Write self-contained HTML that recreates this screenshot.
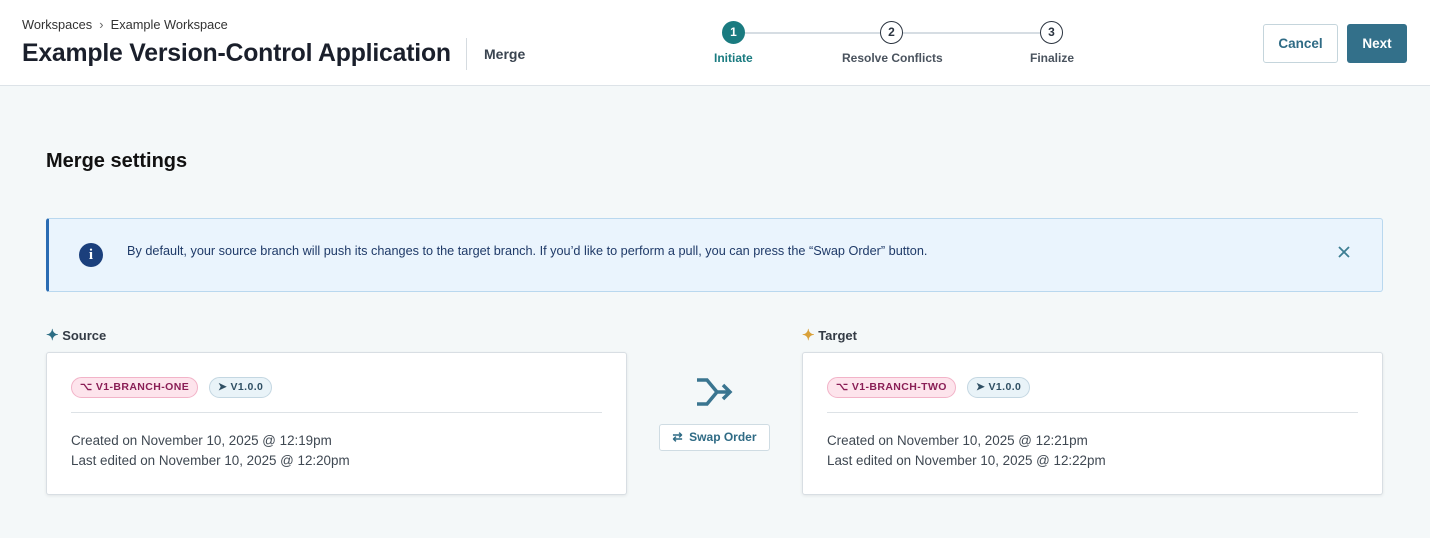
<!DOCTYPE html>
<html><head><meta charset="utf-8"><style>
*{box-sizing:border-box;margin:0;padding:0}
body{width:1430px;height:538px;overflow:hidden;background:#f4f8f9;font-family:"Liberation Sans",sans-serif;position:relative;color:#1c2230}
.abs{position:absolute}
.hdr{left:0;top:0;width:1430px;height:86px;background:#fff;border-bottom:1px solid #dde3e8}
.crumb{left:22px;top:17px;font-size:12.8px;color:#333}
.title{left:22px;top:40px;font-size:24.8px;font-weight:bold;color:#1a1f2b;letter-spacing:-0.2px;white-space:nowrap}
.vsep{left:466px;top:38px;width:1px;height:32px;background:#d5dbe0}
.merge{left:484px;top:46px;font-size:14px;font-weight:bold;color:#3a4450}
.line{top:32px;height:2px;background:#d6dde3}
.circ{width:23px;height:23px;border-radius:50%;border:1.5px solid #2b3440;background:#fff;text-align:center;line-height:20px;font-size:12px;font-weight:bold;color:#2b3440}
.slab{top:51px;font-size:12px;font-weight:bold;color:#4a535e;white-space:nowrap}
.btn{border-radius:3px;font-size:13.5px;font-weight:bold;text-align:center}
.h2{left:46px;top:150px;font-size:20px;font-weight:bold;color:#111}
.info{left:46px;top:218px;width:1337px;height:74px;background:#eaf4fd;border:1px solid #b9d8ef;border-left:3px solid #2a6cb3;border-radius:3px}
.card{background:#fff;border:1px solid #d8dee3;border-radius:3px;box-shadow:0 1px 3px rgba(0,0,0,.08);width:581px;height:143px;top:352px}
.pill{position:absolute;top:24px;height:21px;border-radius:11px;font-size:10.5px;font-weight:bold;letter-spacing:.4px;line-height:19px;padding:0 8px;white-space:nowrap}
.pb{background:#fde4ec;border:1px solid #f2b3c8;color:#8a1e56}
.pv{background:#e9f3f8;border:1px solid #c4d7e2;color:#2f4f63}
.div{position:absolute;left:24px;right:24px;top:59px;height:1px;background:#dde2e6}
.meta{position:absolute;left:24px;top:78px;font-size:13.4px;line-height:20px;color:#3f4852}
.lbl{top:326px;font-size:13px;font-weight:bold;color:#333b45}
</style></head><body>
<div class="abs hdr"></div>
<div class="abs crumb">Workspaces &nbsp;<span style="color:#666">&#x203A;</span>&nbsp; Example Workspace</div>
<div class="abs title">Example Version-Control Application</div>
<div class="abs vsep"></div>
<div class="abs merge">Merge</div>

<div class="abs line" style="left:745px;width:136px"></div>
<div class="abs line" style="left:903px;width:137px"></div>
<div class="abs circ" style="left:722px;top:21px;background:#1a7b80;border-color:#1a7b80;color:#fff">1</div>
<div class="abs circ" style="left:880px;top:21px">2</div>
<div class="abs circ" style="left:1040px;top:21px">3</div>
<div class="abs slab" style="left:714px;color:#1a7b80">Initiate</div>
<div class="abs slab" style="left:842px">Resolve Conflicts</div>
<div class="abs slab" style="left:1030px">Finalize</div>

<div class="abs btn" style="left:1263px;top:24px;width:75px;height:39px;border:1.5px solid #c5d5dc;color:#2f6b85;line-height:37px;background:#fff">Cancel</div>
<div class="abs btn" style="left:1347px;top:24px;width:60px;height:39px;background:#33708a;color:#fff;line-height:39px">Next</div>

<div class="abs h2">Merge settings</div>

<div class="abs info">
  <div style="position:absolute;left:30px;top:24px;width:24px;height:24px;border-radius:50%;background:#1b3f7c;color:#fff;text-align:center;font-weight:bold;font-size:15px;line-height:24px;font-family:'Liberation Serif',serif">i</div>
  <div style="position:absolute;left:78px;top:25px;font-size:12.7px;color:#1f3a68;white-space:nowrap">By default, your source branch will push its changes to the target branch. If you’d like to perform a pull, you can press the “Swap Order” button.</div>
  <svg style="position:absolute;left:1288px;top:26px" width="14" height="14" viewBox="0 0 14 14"><path d="M2 2L12 12M12 2L2 12" stroke="#3d7e93" stroke-width="1.8" fill="none"/></svg>
</div>

<div class="abs lbl" style="left:46px"><span style="color:#2c6d84;font-size:15px">&#x2726;</span> Source</div>
<div class="abs lbl" style="left:802px"><span style="color:#d9a13a;font-size:15px">&#x2726;</span> Target</div>

<div class="abs card" style="left:46px">
  <div class="pill pb" style="left:24px">&#x2325; V1-BRANCH-ONE</div>
  <div class="pill pv" style="left:162px">&#x27A4; V1.0.0</div>
  <div class="div"></div>
  <div class="meta">Created on November 10, 2025 @ 12:19pm<br>Last edited on November 10, 2025 @ 12:20pm</div>
</div>
<div class="abs card" style="left:802px">
  <div class="pill pb" style="left:24px">&#x2325; V1-BRANCH-TWO</div>
  <div class="pill pv" style="left:164px">&#x27A4; V1.0.0</div>
  <div class="div"></div>
  <div class="meta">Created on November 10, 2025 @ 12:21pm<br>Last edited on November 10, 2025 @ 12:22pm</div>
</div>

<svg class="abs" style="left:695px;top:377px" width="40" height="32" viewBox="0 0 40 32"><path d="M2 3H12L22 15L12 27H2M22 15H35M28 8L35 15L28 22" stroke="#3a7590" stroke-width="3.5" fill="none" stroke-linejoin="miter"/></svg>
<div class="abs" style="left:659px;top:424px;width:111px;height:27px;background:#fff;border:1px solid #cfdce3;border-radius:3px;font-size:12px;font-weight:bold;color:#2f6b85;line-height:25px;text-align:center">&#x21C4;&nbsp; Swap Order</div>
</body></html>
